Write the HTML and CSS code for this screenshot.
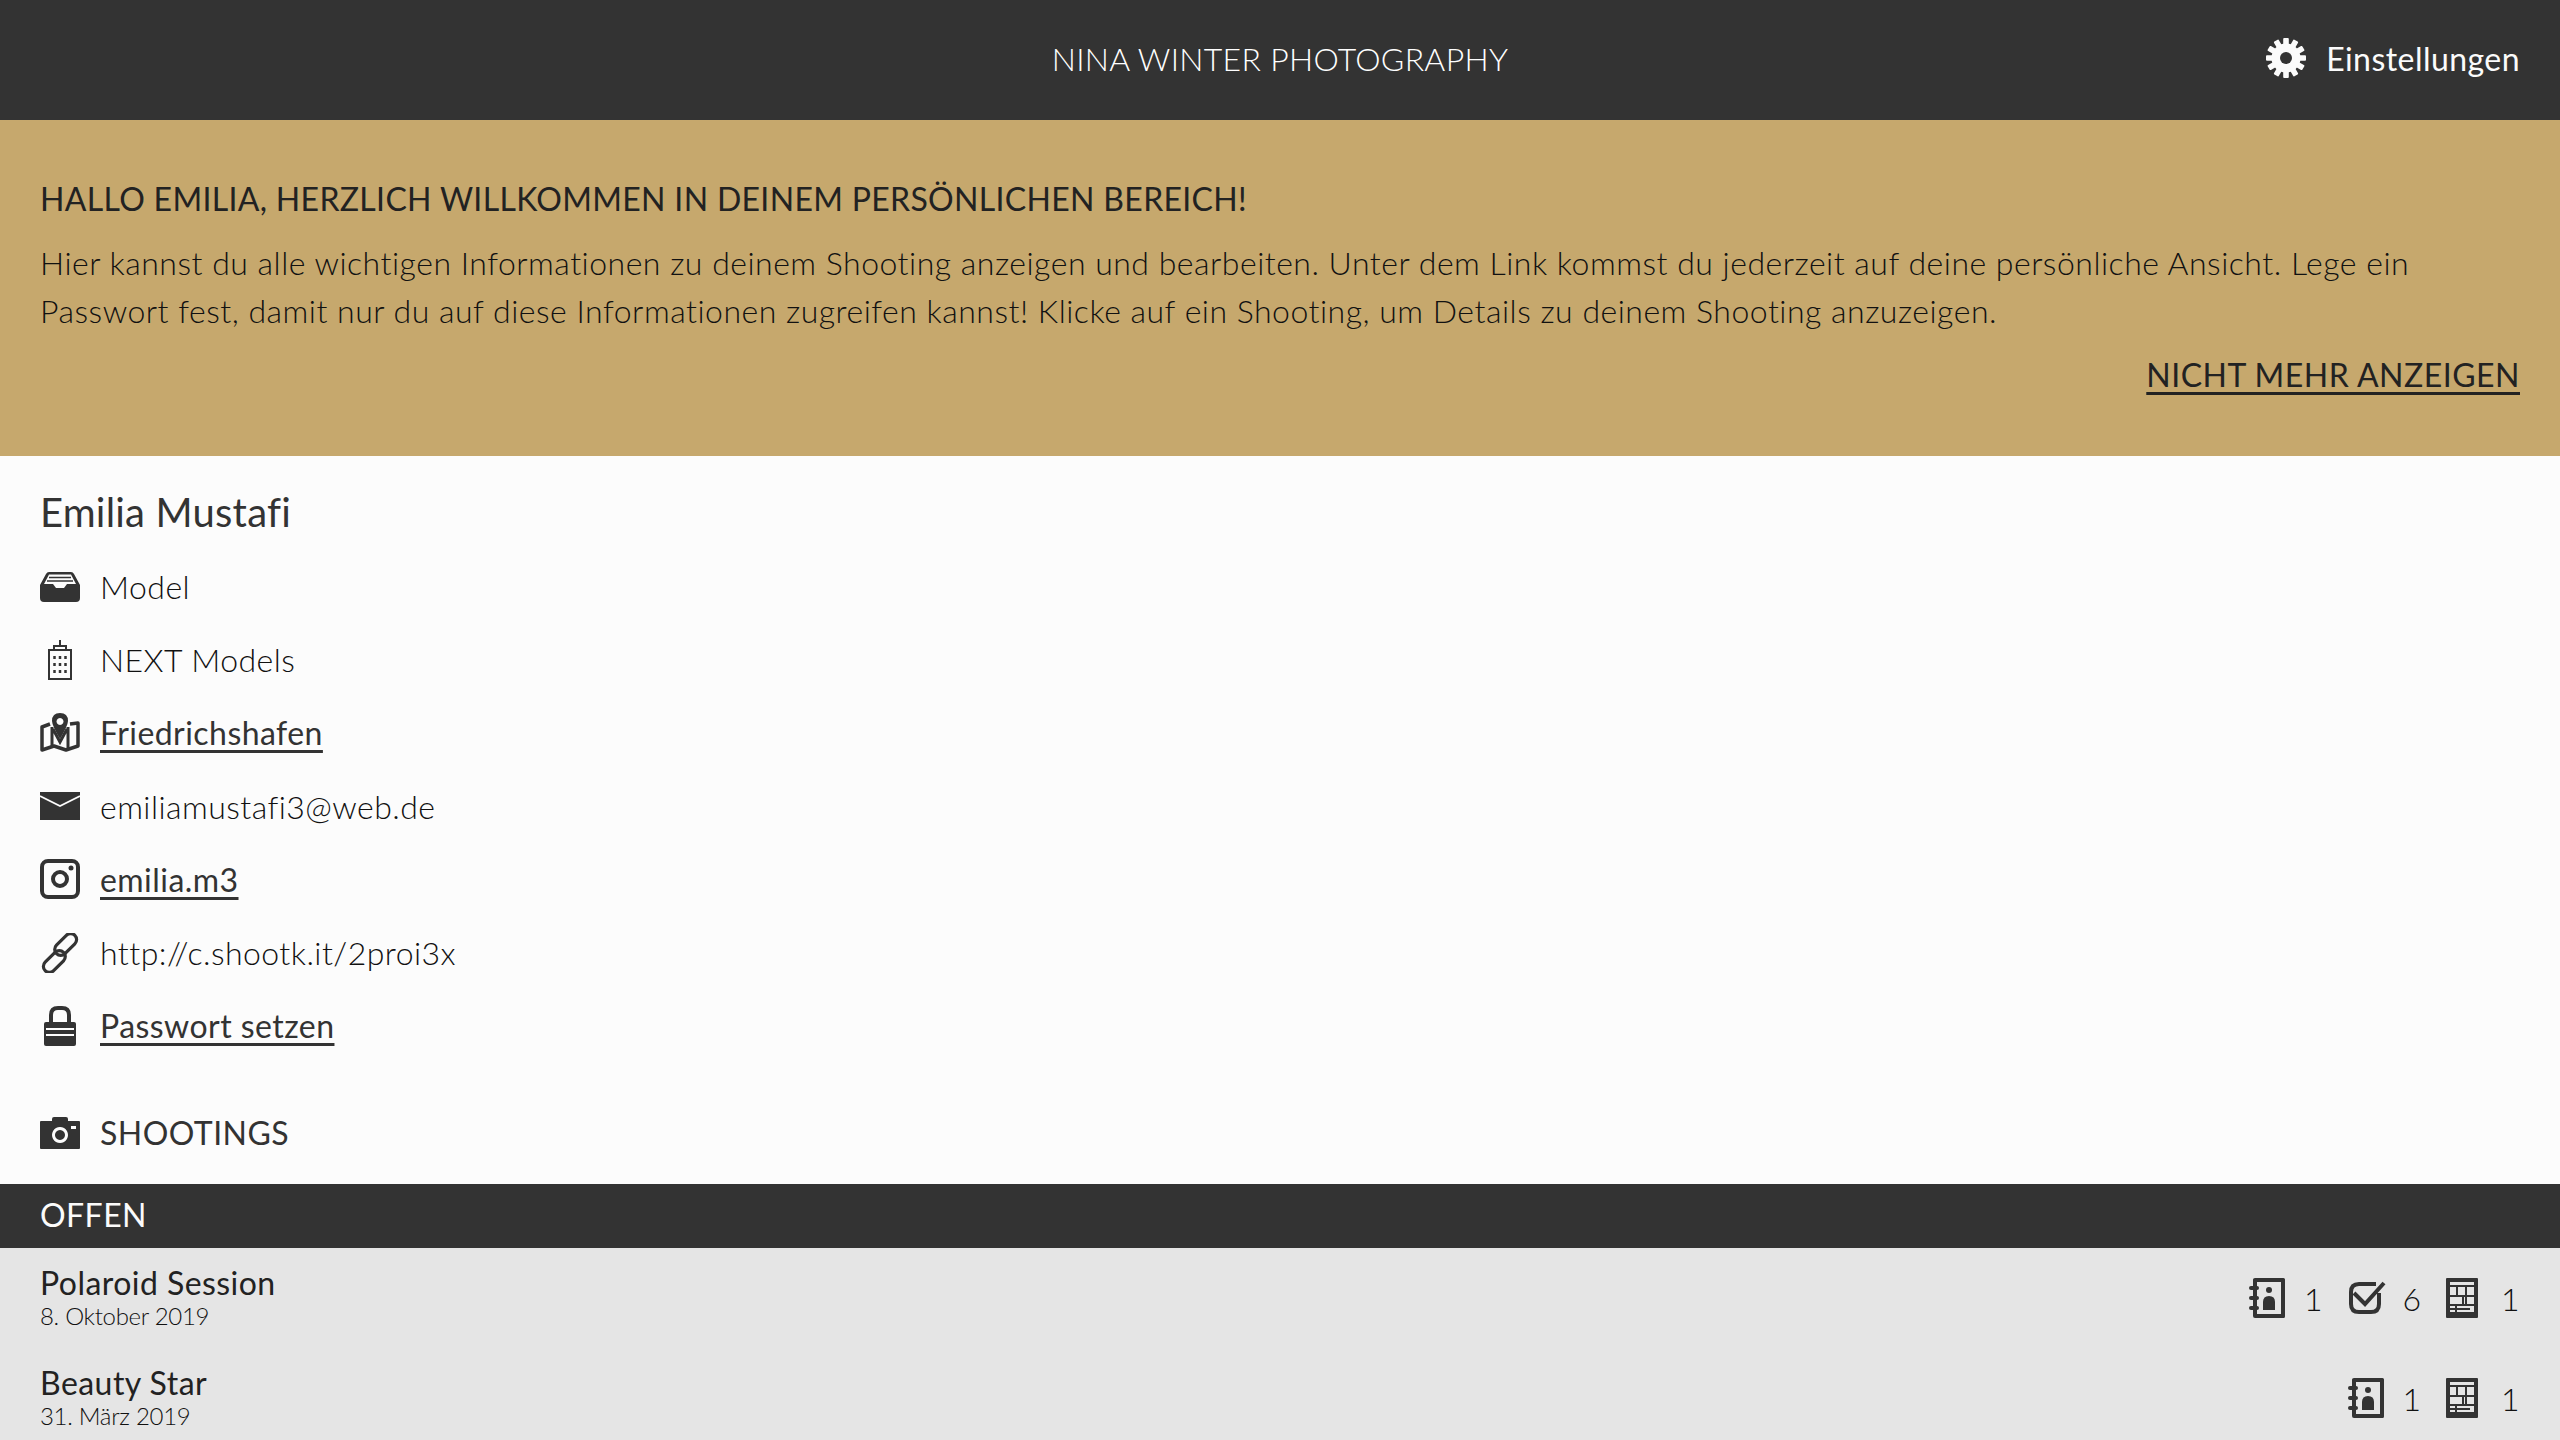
FILE: index.html
```html
<!DOCTYPE html>
<html lang="de">
<head>
    <meta charset="UTF-8">
    <title>Nina Winter Photography</title>
    <link rel="stylesheet" href="styles.css">
</head>
<body>
    <svg class="defs" width="0" height="0">
        <symbol id="i-contact" viewBox="0 0 40 40">
            <path fill="#333" fill-rule="evenodd" d="M6 0H34.500Q36 0 36 1.500V38.500Q36 40 34.500 40H6Q4 40 4 38V1.500Q4 0 6 0ZM8 4V36H32V4Z"/>
            <rect y="8" width="10" height="4" rx="2" fill="#333"/>
            <rect y="18" width="10" height="4" rx="2" fill="#333"/>
            <rect y="28" width="10" height="4" rx="2" fill="#333"/>
            <circle cx="20" cy="12" r="3" fill="#333"/>
            <path fill="#333" d="M14 32V24Q14 18 20 18Q26 18 26 24V32Z"/>
        </symbol>
        <symbol id="i-check" viewBox="0 0 40 40">
            <path fill="none" stroke="#333" stroke-width="4" d="M31 15V26Q31 34 23 34H11Q3 34 3 26V14Q3 6 11 6H28"/>
            <path fill="none" stroke="#333" stroke-width="4" d="M6 15L17 26L36 5"/>
        </symbol>
        <symbol id="i-news" viewBox="0 0 40 40">
            <path fill="#333" fill-rule="evenodd" d="M1 0H31Q32 0 32 1V39Q32 40 31 40H1Q0 40 0 39V1Q0 0 1 0ZM4 4V36H28V4Z"/>
            <path fill="none" stroke="#333" stroke-width="2" d="M4 8H28M4 18H28M4 27H28M11 8V18M20 8V27M17 18V27M11 18V18M4 31H24M4 35H28M10 27V36"/>
        </symbol>
    </svg>

    <header class="topbar">
        <span></span>
        <h1 class="brand">NINA WINTER PHOTOGRAPHY</h1>
        <a class="settings">
            <svg class="gear" viewBox="0 0 40 40">
                <circle cx="20" cy="20" r="14.500" fill="#fbfbfb"/>
                <g fill="#fbfbfb">
                    <rect x="17.200" y="0" width="5.600" height="40" rx="1"/>
                    <rect x="17.200" y="0" width="5.600" height="40" rx="1" transform="rotate(30 20 20)"/>
                    <rect x="17.200" y="0" width="5.600" height="40" rx="1" transform="rotate(60 20 20)"/>
                    <rect x="17.200" y="0" width="5.600" height="40" rx="1" transform="rotate(90 20 20)"/>
                    <rect x="17.200" y="0" width="5.600" height="40" rx="1" transform="rotate(120 20 20)"/>
                    <rect x="17.200" y="0" width="5.600" height="40" rx="1" transform="rotate(150 20 20)"/>
                </g>
                <circle cx="20" cy="20" r="6" fill="#333"/>
            </svg>
            Einstellungen
        </a>
    </header>

    <section class="banner">
        <h2>HALLO EMILIA, HERZLICH WILLKOMMEN IN DEINEM PERSÖNLICHEN BEREICH!</h2>
        <p>Hier kannst du alle wichtigen Informationen zu deinem Shooting anzeigen und bearbeiten. Unter dem Link kommst du jederzeit auf deine persönliche Ansicht. Lege ein Passwort fest, damit nur du auf diese Informationen zugreifen kannst! Klicke auf ein Shooting, um Details zu deinem Shooting anzuzeigen.</p>
        <a class="dismiss">NICHT MEHR ANZEIGEN</a>
    </section>

    <section class="profile">
        <h2 class="name">Emilia Mustafi</h2>
        <ul class="facts">
            <li>
                <svg class="icon" viewBox="0 0 40 40">
                    <path fill="#333" fill-rule="evenodd" d="M9 5H31Q33 5 34 7L40 18V31Q40 35 36 35H4Q0 35 0 31V18L6 7Q7 5 9 5ZM9 7.500L4 17H13L16 21H24L27 17H36L31 7.500Z"/>
                    <path stroke="#333" stroke-width="1.500" d="M9 10.500H31M7 14H33"/>
                </svg>
                <span>Model</span>
            </li>
            <li>
                <svg class="icon" viewBox="0 0 40 40">
                    <path fill="none" stroke="#333" stroke-width="2" d="M9 39V10H31V39ZM14 10V6H26V10M20 6V0"/>
                    <path stroke="#333" stroke-width="2.500" stroke-dasharray="3 4" d="M14.500 16V36M20 16V36M25.500 16V36"/>
                </svg>
                <span>NEXT Models</span>
            </li>
            <li>
                <svg class="icon" viewBox="0 0 40 40">
                    <path fill="#333" fill-rule="evenodd" d="M20 0Q28 0 28 8Q28 12 20 26Q12 12 12 8Q12 0 20 0ZM20 5A3.500 3.500 0 1 0 20.010 5Z"/>
                    <path fill="none" stroke="#333" stroke-width="3.500" stroke-linejoin="round" d="M10 11L2 14V37L14 33L26 37L38 33V10L30 11"/>
                    <path fill="none" stroke="#333" stroke-width="3" d="M12 14V33M28 14V36M13 16L20 29L27 16"/>
                </svg>
                <a>Friedrichshafen</a>
            </li>
            <li>
                <svg class="icon" viewBox="0 0 40 40">
                    <path fill="#333" d="M0 6H40V34H0Z"/>
                    <path fill="none" stroke="#fcfcfc" stroke-width="1.800" d="M0 10L20 20L40 10"/>
                </svg>
                <span>emiliamustafi3@web.de</span>
            </li>
            <li>
                <svg class="icon" viewBox="0 0 40 40">
                    <rect x="2" y="2" width="36" height="36" rx="6" fill="none" stroke="#333" stroke-width="4"/>
                    <circle cx="20" cy="20" r="7" fill="none" stroke="#333" stroke-width="4"/>
                    <circle cx="31" cy="9" r="2.500" fill="#333"/>
                </svg>
                <a>emilia.m3</a>
            </li>
            <li>
                <svg class="icon" viewBox="0 0 40 40">
                    <g fill="none" stroke="#333" stroke-width="3.200" transform="rotate(-45 20 20)">
                        <rect x="-3" y="16" width="26" height="12" rx="6"/>
                        <rect x="17" y="12" width="26" height="12" rx="6"/>
                    </g>
                </svg>
                <span>http://c.shootk.it/2proi3x</span>
            </li>
            <li>
                <svg class="icon" viewBox="0 0 40 40">
                    <path fill="none" stroke="#333" stroke-width="4" d="M11 18V9Q11 2 18 2H22Q29 2 29 9V18"/>
                    <rect x="4" y="16" width="32" height="24" rx="2" fill="#333"/>
                    <path stroke="#fcfcfc" stroke-width="2" d="M6 23H34M6 29H34"/>
                </svg>
                <a>Passwort setzen</a>
            </li>
        </ul>
        <div class="section-title">
            <svg class="icon" viewBox="0 0 40 40">
                <path fill="#333" fill-rule="evenodd" d="M12 6Q12 4 14 4H26Q28 4 28 6V8H39Q40 8 40 9V35Q40 36 39 36H1Q0 36 0 35V9Q0 8 1 8H12ZM20 14A8 8 0 1 0 20.010 14ZM20 17A5 5 0 1 1 19.990 17ZM31 13V16H36V13Z"/>
            </svg>
            <span>SHOOTINGS</span>
        </div>
    </section>

    <div class="group-bar">OFFEN</div>

    <section class="shootings">
        <article class="shooting">
            <div class="shooting-text">
                <h3>Polaroid Session</h3>
                <time>8. Oktober 2019</time>
            </div>
            <div class="stats">
                <div class="stat"><svg class="stat-icon"><use href="#i-contact"/></svg><span>1</span></div>
                <div class="stat"><svg class="stat-icon"><use href="#i-check"/></svg><span>6</span></div>
                <div class="stat"><svg class="stat-icon"><use href="#i-news"/></svg><span>1</span></div>
            </div>
        </article>
        <article class="shooting">
            <div class="shooting-text">
                <h3>Beauty Star</h3>
                <time>31. März 2019</time>
            </div>
            <div class="stats">
                <div class="stat"><svg class="stat-icon"><use href="#i-contact"/></svg><span>1</span></div>
                <div class="stat"><svg class="stat-icon"><use href="#i-news"/></svg><span>1</span></div>
            </div>
        </article>
    </section>
</body>
</html>
```

FILE: styles.css
```css
body {
    margin: 0;
    height: 1440px;
    overflow: hidden;
    background-color: #fcfcfc;
    color: #111;
    font-family: 'Lato', sans-serif;
    font-size: 32px;
    font-weight: 300;
    font-variant-ligatures: none;
    letter-spacing: 0.45px;
}

h1, h2, h3, p, ul {
    margin: 0;
    padding: 0;
    font-weight: inherit;
}

a {
    color: #333;
    font-weight: 400;
    text-decoration: underline;
    text-underline-offset: 5px;
}

.defs {
    position: absolute;
}

/* Kopfzeile */
.topbar {
    display: grid;
    grid-template-columns: 1fr auto 1fr;
    align-items: center;
    height: 120px;
    padding: 0 40px 4px;
    box-sizing: border-box;
    background-color: #333;
    color: #fff;
}

.brand {
    font-size: 32px;
    letter-spacing: 0.3px;
}

.settings {
    display: flex;
    justify-content: flex-end;
    align-items: center;
    gap: 20px;
    color: #fbfbfb;
    text-decoration: none;
}

.gear {
    width: 40px;
    height: 40px;
}

/* Hinweis */
.banner {
    display: flex;
    flex-direction: column;
    height: 336px;
    padding: 55px 40px 0;
    box-sizing: border-box;
    background-color: #c6a86d;
    color: #111;
}

.banner h2 {
    color: #222;
    font-size: 32px;
    font-weight: 400;
    line-height: 48px;
    letter-spacing: 0.32px;
}

.banner p {
    margin-top: 16px;
    line-height: 48px;
    letter-spacing: 0.5px;
}

.dismiss {
    align-self: flex-end;
    margin-top: 16px;
    color: #222;
    line-height: 48px;
    letter-spacing: 0.5px;
}

/* Profil */
.profile {
    height: 728px;
    padding: 30px 40px 0;
    box-sizing: border-box;
}

.name {
    color: #333;
    font-size: 40px;
    font-weight: 400;
    line-height: 52px;
    letter-spacing: 0.2px;
}

.facts {
    margin-top: 12px;
    list-style: none;
}

.facts li, .section-title {
    display: flex;
    align-items: center;
    gap: 20px;
    height: 73.2px;
}

.section-title {
    margin-top: 34px;
    color: #333;
    font-weight: 400;
}

.icon {
    flex: none;
    width: 40px;
    height: 40px;
}

.group-bar {
    height: 64px;
    padding: 0 40px;
    background-color: #333;
    color: #fbfbfb;
    font-weight: 400;
    line-height: 62px;
}

/* Shootings */
.shootings {
    height: 192px;
    background-color: #e5e5e5;
}

.shooting {
    display: flex;
    justify-content: space-between;
    align-items: center;
    height: 100px;
    padding: 0 40px;
}

.shooting-text {
    padding-bottom: 3px;
}

.shooting h3 {
    color: #222;
    font-size: 32px;
    font-weight: 400;
    line-height: 38px;
}

.shooting time {
    display: block;
    font-size: 24px;
    line-height: 28px;
    letter-spacing: -0.3px;
}

.stats {
    display: flex;
    gap: 24.5px;
}

.stat {
    display: flex;
    justify-content: space-between;
    align-items: center;
    width: 74px;
}

.stat-icon {
    width: 40px;
    height: 40px;
}
```
